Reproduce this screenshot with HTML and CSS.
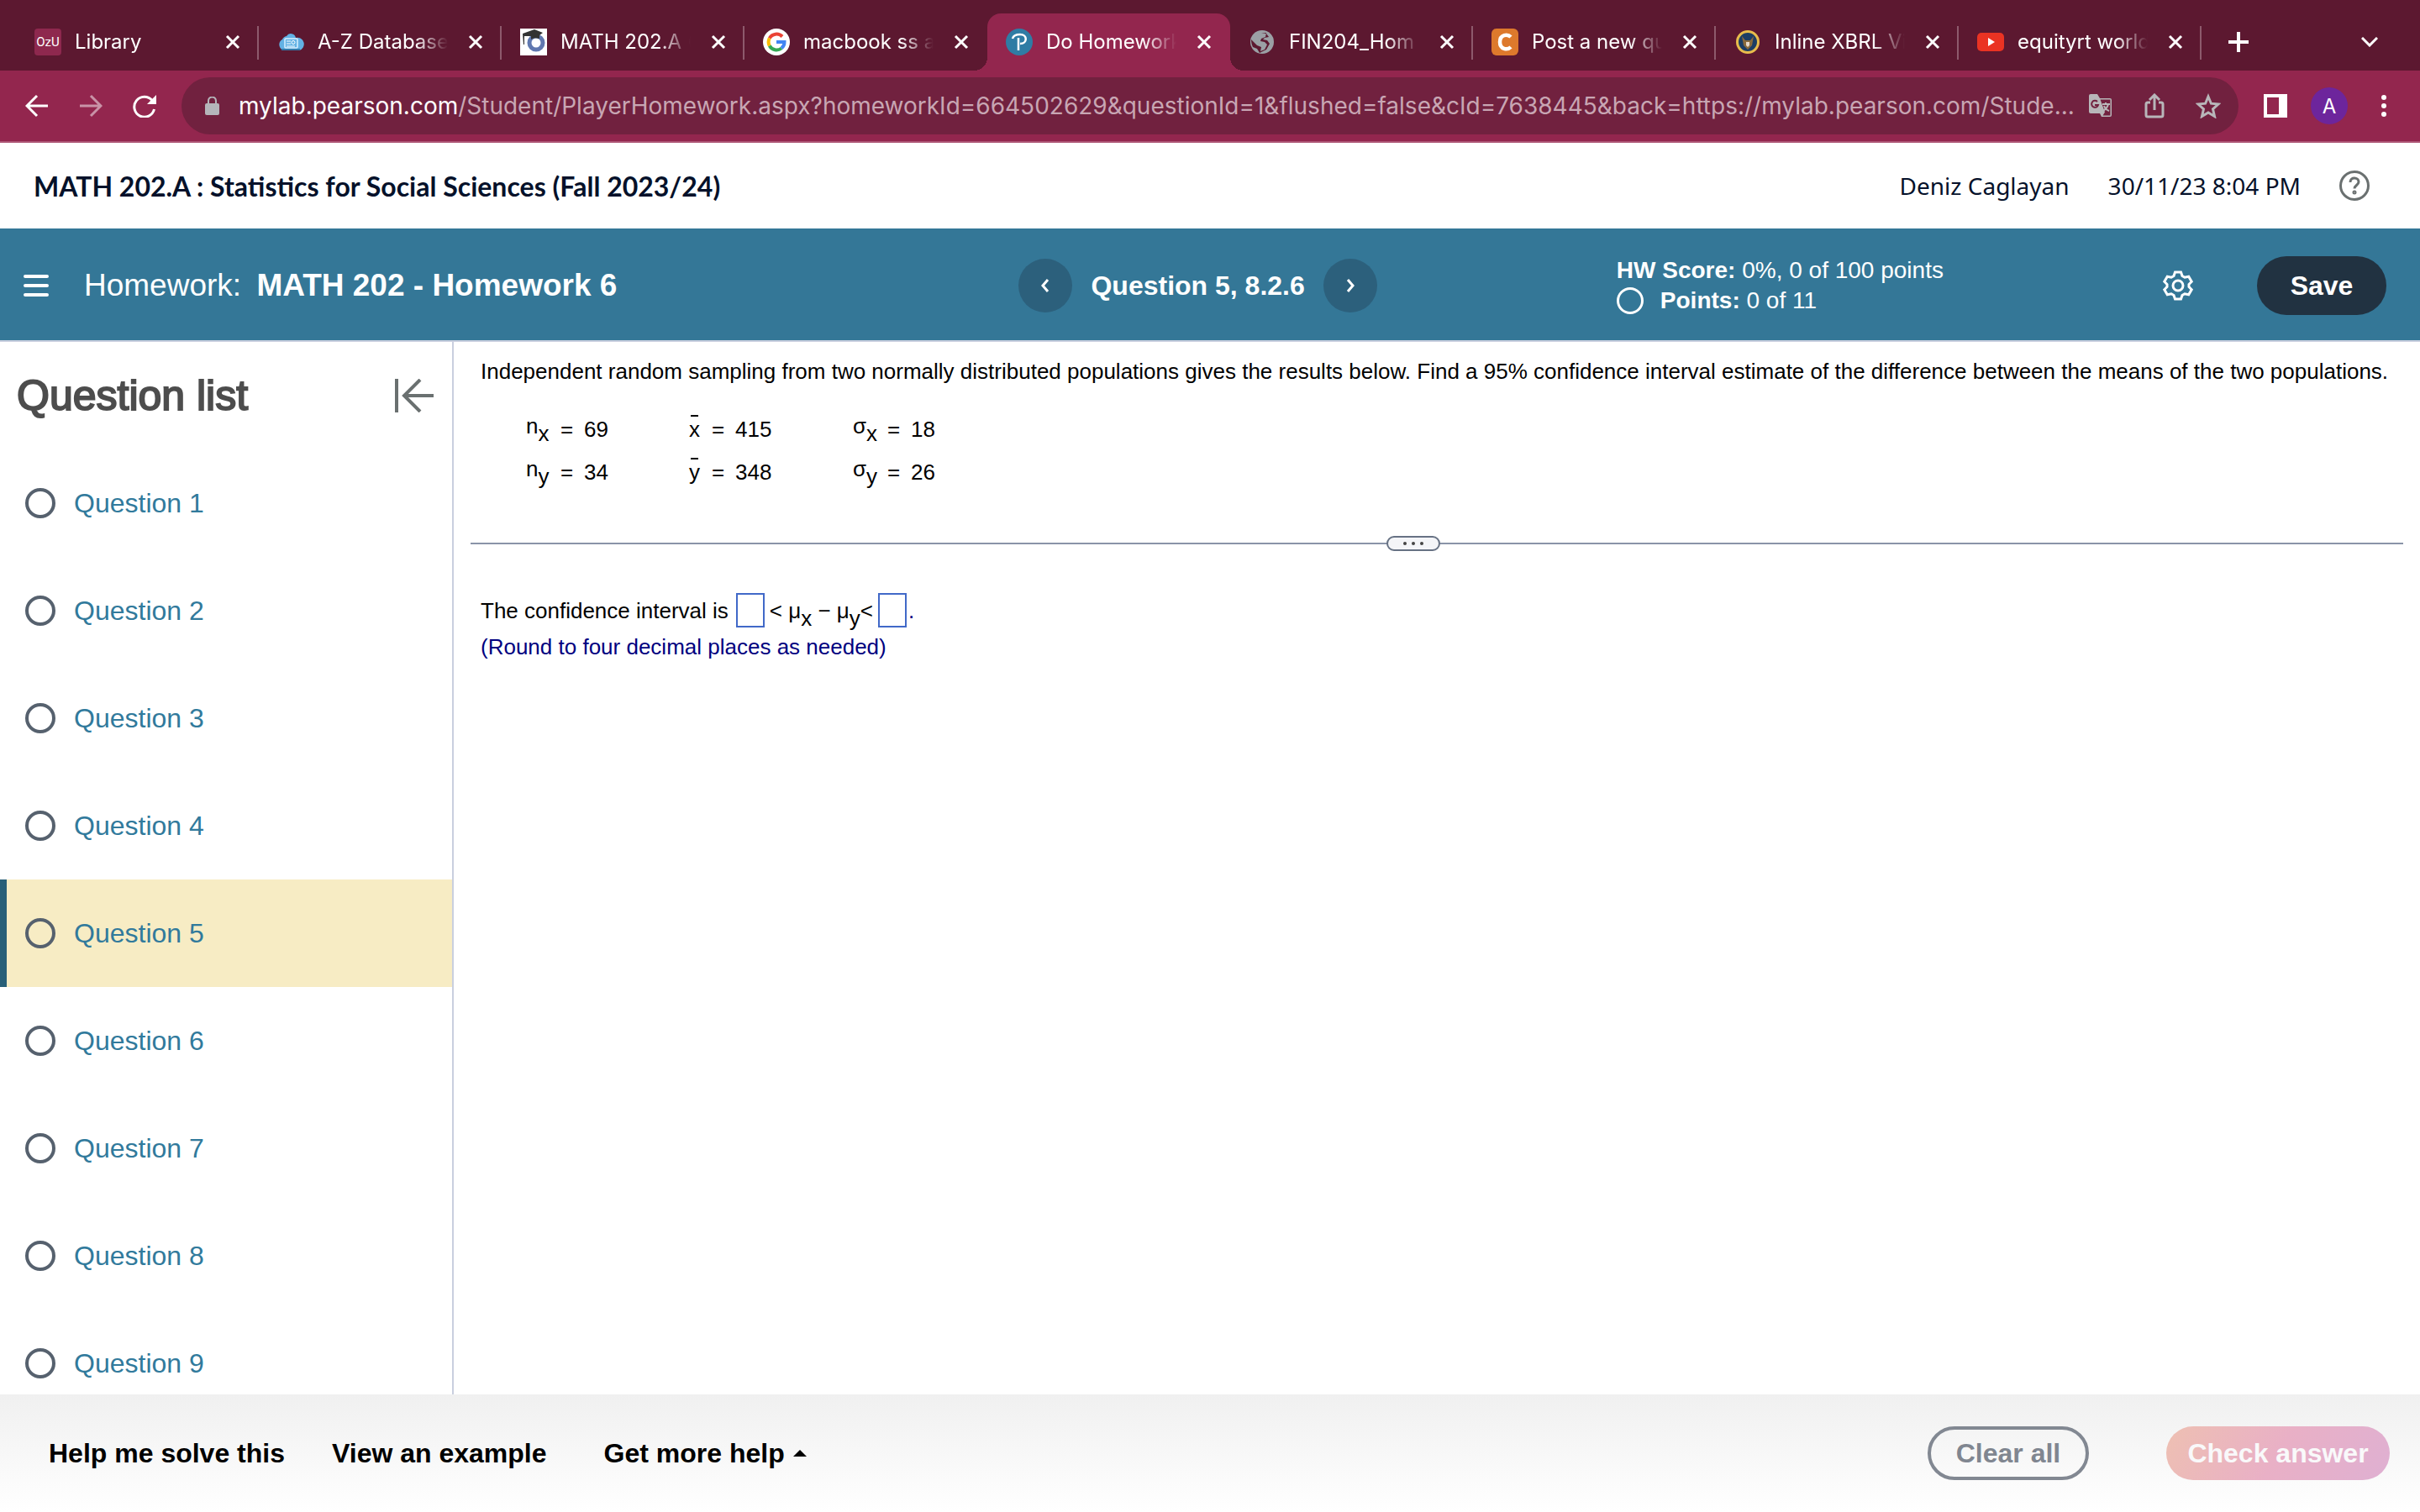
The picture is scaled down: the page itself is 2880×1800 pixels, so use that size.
FILE: index.html
```html
<!DOCTYPE html>
<html lang="en">
  <head>
    <meta charset="UTF-8" />
    <meta name="viewport" content="width=device-width, initial-scale=1.0" />
    <title>Do Homework - MATH 202 - Homework 6</title>
    <link rel="stylesheet" href="styles.css">
  </head>

  <body>
    <!-- browser tabs -->
    <div class="tabs">
      <div class="tab">
        <span class="favicon ozu">OzU</span>
        <span class="tab-title">Library</span>
        <button class="tab-close" aria-label="Close tab"><svg viewBox="0 0 18 18"><path d="M2 2l14 14M16 2L2 16" /></svg></button>
      </div>
      <div class="tab">
        <svg class="favicon" viewBox="0 0 32 32"><path d="M8 26a7 7 0 0 1-2-13 7 6 0 0 1 5-4 6 6 0 0 1 11 2 7 7 0 0 1 4 15z" fill="#62b1e4" /><path d="M5 25h22" stroke="#3278a8" stroke-width="2" /><rect x="9" y="12" width="15" height="11" rx="1" fill="#62b1e4" stroke="#d8efff" stroke-width="1.5" /><path d="M11 15h5M11 18h5M11 21h10" stroke="#fff" /><circle cx="19" cy="16.500" r="2" fill="none" stroke="#fff" /></svg>
        <span class="tab-title">A-Z Database</span>
        <button class="tab-close" aria-label="Close tab"><svg viewBox="0 0 18 18"><path d="M2 2l14 14M16 2L2 16" /></svg></button>
      </div>
      <div class="tab">
        <svg class="favicon" viewBox="0 0 32 32"><path d="M0 0h32v32H0z" fill="#fff" /><circle cx="19" cy="17" r="8" fill="none" stroke="#6078b0" stroke-width="5" /><path d="M3 6l14-5 10 4-4 3v4c-4-1-7-1-10 1V9L5 9v10H4z" fill="#333" /></svg>
        <span class="tab-title">MATH 202.A (</span>
        <button class="tab-close" aria-label="Close tab"><svg viewBox="0 0 18 18"><path d="M2 2l14 14M16 2L2 16" /></svg></button>
      </div>
      <div class="tab before-active">
        <svg class="favicon" viewBox="0 0 32 32"><circle cx="16" cy="16" r="16" fill="#fff" /><g fill="none" stroke-width="4"><path d="M23 9.500A9.500 9.500 0 0 0 7.800 11.500" stroke="#ea4335" /><path d="M7.800 11.500a9.500 9.500 0 0 0 0 9" stroke="#fbbc05" /><path d="M7.800 20.500A9.500 9.500 0 0 0 22 23.500" stroke="#34a853" /><path d="M22 23.500a9.500 9.500 0 0 0 3.500-7.500H16" stroke="#4285f4" /></g></svg>
        <span class="tab-title">macbook ss a</span>
        <button class="tab-close" aria-label="Close tab"><svg viewBox="0 0 18 18"><path d="M2 2l14 14M16 2L2 16" /></svg></button>
      </div>
      <div class="tab active">
        <svg class="favicon" viewBox="0 0 32 32"><circle cx="16" cy="16" r="16" fill="#2f7ca4" /><path d="M8 12c1-4 5-5 9-5 9 0 9 11 0 11M15 11v15" fill="none" stroke="#fff" stroke-width="2.500" /></svg>
        <span class="tab-title">Do Homework</span>
        <button class="tab-close" aria-label="Close tab"><svg viewBox="0 0 18 18"><path d="M2 2l14 14M16 2L2 16" /></svg></button>
      </div>
      <div class="tab">
        <svg class="favicon" viewBox="0 0 32 32"><circle cx="16" cy="16" r="14" fill="#9ba0a5" /><path d="M15 5h6l-1 5-5 2-1 3 5 1 3 3-3 6-5 2 1-5-5-2-7-7c0 4 1 7 2 9l5 2 3 5 2-1 6-3 4-7-3-4-5-1 2-2 5-1-3-4z" fill="#5c1830" /></svg>
        <span class="tab-title">FIN204_Hom</span>
        <button class="tab-close" aria-label="Close tab"><svg viewBox="0 0 18 18"><path d="M2 2l14 14M16 2L2 16" /></svg></button>
      </div>
      <div class="tab">
        <svg class="favicon" viewBox="0 0 32 32"><rect width="32" height="32" rx="6" fill="#dd792c" /><path d="M23 10c-4-4-13-3-13 6s9 10 13 6" fill="none" stroke="#fff" stroke-width="4.500" /></svg>
        <span class="tab-title">Post a new qu</span>
        <button class="tab-close" aria-label="Close tab"><svg viewBox="0 0 18 18"><path d="M2 2l14 14M16 2L2 16" /></svg></button>
      </div>
      <div class="tab">
        <svg class="favicon" viewBox="0 0 32 32"><circle cx="16" cy="16" r="12.500" fill="#1c3d64" stroke="#e8bc4c" stroke-width="3" /><path d="M9 9l2 11 5 5 5-5 2-11-4 5h-6z" fill="#8a6a3c" /><path d="M14 16h4v4l-2 2-2-2z" fill="#e6d8c8" /></svg>
        <span class="tab-title">Inline XBRL Vi</span>
        <button class="tab-close" aria-label="Close tab"><svg viewBox="0 0 18 18"><path d="M2 2l14 14M16 2L2 16" /></svg></button>
      </div>
      <div class="tab">
        <svg class="favicon" viewBox="0 0 32 32"><rect y="5" width="32" height="22" rx="5" fill="#ea3323" /><path d="M13 11l8 5-8 5z" fill="#fff" /></svg>
        <span class="tab-title">equityrt world</span>
        <button class="tab-close" aria-label="Close tab"><svg viewBox="0 0 18 18"><path d="M2 2l14 14M16 2L2 16" /></svg></button>
      </div>
      <button class="new-tab" aria-label="New tab"><svg viewBox="0 0 24 24"><path d="M12 0v24M0 12h24" /></svg></button>
      <button class="tab-search" aria-label="Search tabs"><svg viewBox="0 0 20 12"><path d="M1 1l9 9 9-9" /></svg></button>
    </div>

    <!-- browser toolbar -->
    <div class="toolbar">
      <button class="nav-icon" aria-label="Back"><svg viewBox="0 0 28 28"><path d="M27 14H3M14 2L2 14l12 12" /></svg></button>
      <button class="nav-icon disabled" aria-label="Forward"><svg viewBox="0 0 28 28"><path d="M1 14h24M14 2l12 12-12 12" /></svg></button>
      <button class="nav-icon" aria-label="Reload"><svg viewBox="0 0 28 28"><path d="M23 7.500A12 12 0 1 0 25.500 18" /><path d="M28 1v11H17z" fill="#fff" stroke="none" /></svg></button>
      <div class="omnibox">
        <svg class="lock" viewBox="0 0 18 22"><rect y="8" width="17" height="14" rx="2" fill="#b5b5ba" /><path d="M4 9V5a4.500 4.500 0 0 1 9 0v4" fill="none" stroke="#b5b5ba" stroke-width="2" /></svg>
        <p class="url"><span>mylab.pearson.com</span>/Student/PlayerHomework.aspx?homeworkId=664502629&amp;questionId=1&amp;flushed=false&amp;cId=7638445&amp;back=https://mylab.pearson.com/Stude...</p>
        <button class="omni-icon" aria-label="Translate"><svg viewBox="0 0 30 30"><path d="M3 1h8l3 5h12a2 2 0 0 1 2 2v18a2 2 0 0 1-2 2H16l-2-4H3a2 2 0 0 1-2-2V3a2 2 0 0 1 2-2z" fill="#b8b6b9" stroke="none" /><path d="M14.500 7.500h12v19h-9l2.500-4z" fill="#71213f" stroke="none" /><path d="M11 10a4 4 0 1 0 1 4H8" stroke="#71213f" stroke-width="2" /><path d="M17 13h9M21 11v2M24 13c-1 4-3 6-6 8M19 15c1 3 3 5 6 6" stroke-width="2" /></svg></button>
        <button class="omni-icon" aria-label="Share"><svg viewBox="0 0 30 30"><path d="M10 11H7a2 2 0 0 0-2 2v13a2 2 0 0 0 2 2h16a2 2 0 0 0 2-2V13a2 2 0 0 0-2-2h-3M15 20V3M9 8l6-6 6 6" /></svg></button>
        <button class="omni-icon" aria-label="Bookmark"><svg viewBox="0 0 30 30"><path d="M15 4l3.400 8.200 8.600.800-6.500 5.800 2 8.700-7.500-4.600-7.500 4.600 2-8.700L3 13l8.600-.800z" /></svg></button>
      </div>
      <button class="side-panel" aria-label="Side panel"></button>
      <button class="avatar" aria-label="Profile">A</button>
      <button class="more" aria-label="More"><svg viewBox="0 0 6 26"><circle cx="3" cy="3" r="3" /><circle cx="3" cy="13" r="3" /><circle cx="3" cy="23" r="3" /></svg></button>
    </div>

    <header class="course">
      <h1>MATH 202.A : Statistics for Social Sciences (Fall 2023/24)</h1>
      <span class="user">Deniz Caglayan</span>
      <span class="date">30/11/23 8:04 PM</span>
      <button class="help" aria-label="Help"><svg viewBox="0 0 36 36"><circle cx="18" cy="18" r="16.500" /><path d="M13 14c0-7 10-6 10-.500 0 4-5 4-5 8" /><circle cx="18" cy="26" r="1" /></svg></button>
    </header>

    <div class="homework">
      <div class="homework-name">
        <button class="menu" aria-label="Menu"><svg viewBox="0 0 30 26"><path d="M2 2h26M2 13h26M2 24h26" /></svg></button>
        <h2>Homework: <b>MATH 202 - Homework 6</b></h2>
      </div>
      <div class="question-nav">
        <button class="round" aria-label="Previous question"><svg viewBox="0 0 10 16"><path d="M8 1L2 8l6 7" /></svg></button>
        <h3>Question 5, 8.2.6</h3>
        <button class="round" aria-label="Next question"><svg viewBox="0 0 10 16"><path d="M2 1l6 7-6 7" /></svg></button>
      </div>
      <div class="score-bar">
        <div class="score">
          <p><b>HW Score:</b> 0%, 0 of 100 points</p>
          <p class="points"><i class="ring"></i><span><b>Points:</b> 0 of 11</span></p>
        </div>
        <button class="settings" aria-label="Settings"><svg viewBox="0 0 36 36"><path d="M14.500 2h7l1.500 4.500 3 1.700 4.700-1 3.500 6-3.200 3.300v3l3.200 3.300-3.500 6-4.700-1-3 1.700-1.500 4.500h-7L13 29.500l-3-1.700-4.700 1-3.500-6L5 19.500v-3l-3.200-3.300 3.500-6 4.700 1 3-1.700z" /><circle cx="18" cy="18" r="6" /></svg></button>
        <button class="save">Save</button>
      </div>
    </div>

    <div class="content">
      <aside class="question-list">
        <div class="list-head">
          <h2>Question list</h2>
          <button class="collapse" aria-label="Collapse list"><svg viewBox="0 0 46 40"><path d="M2 0v40M46 20H11M30 1L11 20l19 19" /></svg></button>
        </div>
        <ul>
          <li><i class="circle"></i><a href="#">Question 1</a></li>
          <li><i class="circle"></i><a href="#">Question 2</a></li>
          <li><i class="circle"></i><a href="#">Question 3</a></li>
          <li><i class="circle"></i><a href="#">Question 4</a></li>
          <li class="current"><i class="circle"></i><a href="#">Question 5</a></li>
          <li><i class="circle"></i><a href="#">Question 6</a></li>
          <li><i class="circle"></i><a href="#">Question 7</a></li>
          <li><i class="circle"></i><a href="#">Question 8</a></li>
          <li><i class="circle"></i><a href="#">Question 9</a></li>
        </ul>
      </aside>

      <main class="question">
        <p class="prompt">Independent random sampling from two normally distributed populations gives the results below. Find a 95% confidence interval estimate of the difference between the means of the two populations.</p>
        <table class="data">
          <tr>
            <td class="symbol"><span class="raised">n</span><sub>x</sub></td><td class="equals">=</td><td class="value">69</td>
            <td class="mean"><span class="bar">x</span></td><td class="equals">=</td><td class="value wide">415</td>
            <td class="symbol"><span class="raised">σ</span><sub>x</sub></td><td class="equals">=</td><td class="value">18</td>
          </tr>
          <tr>
            <td class="symbol"><span class="raised">n</span><sub>y</sub></td><td class="equals">=</td><td class="value">34</td>
            <td class="mean"><span class="bar">y</span></td><td class="equals">=</td><td class="value wide">348</td>
            <td class="symbol"><span class="raised">σ</span><sub>y</sub></td><td class="equals">=</td><td class="value">26</td>
          </tr>
        </table>
        <div class="divider"><button aria-label="Resize"><i></i><i></i><i></i></button></div>
        <div class="answer">
          <label for="lower">The confidence interval is</label>
          <input type="text" id="lower" />
          <label for="upper">&lt; μ<sub>x</sub> − μ<sub>y</sub>&lt;</label>
          <input type="text" id="upper" /><span class="dot">.</span>
        </div>
        <p class="hint">(Round to four decimal places as needed)</p>
      </main>
    </div>

    <footer>
      <a href="#">Help me solve this</a>
      <a href="#">View an example</a>
      <a href="#" class="more-help">Get more help<svg viewBox="0 0 16 8"><path d="M0 8l8-8 8 8z" /></svg></a>
      <button class="clear">Clear all</button>
      <button class="check">Check answer</button>
    </footer>
  </body>
</html>
```
FILE: styles.css
```css
* {
  box-sizing: border-box;
}

body {
  font-family: "Liberation Sans", Arial, sans-serif;
  background: white;
  color: black;
  display: flex;
  flex-direction: column;
  height: 100vh;
  margin: 0;
  overflow: hidden;
}

h1,
h2,
h3,
p,
ul {
  margin: 0;
  padding: 0;
}

button {
  font-family: inherit;
  background: none;
  border: none;
  padding: 0;
  color: inherit;
  cursor: pointer;
  flex-shrink: 0;
}

svg {
  display: block;
  fill: none;
}

/* tabs */
.tabs {
  background: #5c1830;
  color: white;
  height: 84px;
  padding: 16px 50px 0 19px;
  display: flex;
  align-items: stretch;
  font-family: Inter, sans-serif;
  flex-shrink: 0;
}

.tab {
  position: relative;
  flex: 0 1 289px;
  min-width: 0;
  display: flex;
  align-items: center;
  padding: 0 22px;
}

.tab::after {
  content: "";
  position: absolute;
  right: 0;
  top: 15px;
  width: 2px;
  height: 40px;
  background: #8d5a6c;
}

.tab.before-active::after {
  display: none;
}

.tab.active {
  background: #93264e;
  border-radius: 16px 16px 0 0;
}

/* rounded feet of the active tab */
.tab.active::before,
.tab.active::after {
  content: "";
  position: absolute;
  top: auto;
  bottom: 0;
  width: 16px;
  height: 16px;
}

.tab.active::before {
  left: -16px;
  background: radial-gradient(circle at 0 0, transparent 16px, #93264e 16px);
}

.tab.active::after {
  right: -16px;
  background: radial-gradient(circle at 100% 0, transparent 16px, #93264e 16px);
}

.favicon {
  width: 32px;
  height: 32px;
  margin-right: 16px;
  flex-shrink: 0;
}

.ozu {
  background: #8e284e;
  border-radius: 4px;
  font: 15px/32px Roboto, sans-serif;
  text-align: center;
}

.tab-title {
  flex: 1;
  font-size: 24px;
  line-height: 32px;
  white-space: nowrap;
  overflow: hidden;
  margin-right: 24px;
  -webkit-mask-image: linear-gradient(to right, black 75%, transparent);
  mask-image: linear-gradient(to right, black 75%, transparent);
}

.tab-close svg {
  width: 18px;
  height: 18px;
  stroke: white;
  stroke-width: 3;
}

.new-tab svg {
  width: 24px;
  height: 24px;
  margin-left: 32px;
  stroke: white;
  stroke-width: 4;
}

.tab-search {
  margin-left: auto;
}

.tab-search svg {
  width: 20px;
  height: 12px;
  stroke: white;
  stroke-width: 3;
}

/* toolbar */
.toolbar {
  background: #93264e;
  border-bottom: 2px solid #ad5575;
  color: white;
  height: 86px;
  padding: 0 40px 0 30px;
  display: flex;
  align-items: center;
  font-family: Inter, sans-serif;
  flex-shrink: 0;
}

.nav-icon {
  margin-right: 36px;
}

.nav-icon svg {
  width: 28px;
  height: 28px;
  stroke: white;
  stroke-width: 3;
}

.nav-icon.disabled {
  opacity: 0.5;
}

.omnibox {
  flex: 1;
  min-width: 0;
  height: 68px;
  border-radius: 34px;
  background: #71213f;
  display: flex;
  align-items: center;
  gap: 34px;
  padding: 0 21px 0 28px;
  margin: 0 30px 0 -6px;
}

.lock {
  width: 18px;
  height: 22px;
  flex-shrink: 0;
}

.url {
  flex: 1;
  min-width: 0;
  margin-left: -12px;
  margin-right: -24px;
  font-size: 28px;
  line-height: 36px;
  color: #c8a6b3;
  white-space: nowrap;
}

.url span {
  color: white;
}

.omni-icon svg {
  width: 30px;
  height: 30px;
  stroke: #b8b6b9;
  stroke-width: 3;
}

.side-panel {
  width: 28px;
  height: 28px;
  border: 4px solid white;
  border-right-width: 10px;
}

.avatar {
  width: 44px;
  height: 44px;
  border-radius: 50%;
  background: #6d259c;
  font-size: 24px;
  margin: 0 40px 0 28px;
}

.more svg {
  width: 6px;
  height: 26px;
  fill: white;
}

/* course header */
.course {
  height: 102px;
  padding: 0 60px 0 40px;
  display: flex;
  align-items: center;
  font-family: "Noto Sans", sans-serif;
  font-size: 28px;
  color: #05112a;
  flex-shrink: 0;
}

.course h1 {
  font-family: Lato, sans-serif;
  font-size: 32px;
  font-weight: bold;
  margin-right: auto;
}

.date {
  margin: 0 46px;
}

.help svg {
  width: 36px;
  height: 36px;
  stroke: #6a7070;
  stroke-width: 3;
}

/* homework header */
.homework {
  background: #347797;
  border-bottom: 2px solid #c9cfdf;
  color: white;
  height: 135px;
  padding-top: 3px;
  display: grid;
  grid-template-columns: 42.1% 24.7% 1fr;
  align-items: center;
  flex-shrink: 0;
}

.homework-name {
  display: flex;
  align-items: center;
  padding-left: 28px;
}

.menu svg {
  width: 30px;
  height: 26px;
  margin-right: 42px;
  stroke: white;
  stroke-width: 4;
  stroke-linecap: round;
}

.homework-name h2 {
  font-size: 37px;
  font-weight: normal;
}

.homework-name b {
  margin-left: 8px;
}

.question-nav {
  display: flex;
  align-items: center;
  gap: 22px;
}

.question-nav h3 {
  font-size: 32px;
}

.round {
  width: 64px;
  height: 64px;
  border-radius: 50%;
  background: #2c607c;
}

.round svg {
  width: 10px;
  height: 16px;
  margin: 0 auto;
  stroke: white;
  stroke-width: 3;
}

.score-bar {
  display: flex;
  align-items: center;
  padding-right: 40px;
}

.score {
  font-size: 28px;
  line-height: 36px;
  margin-right: auto;
}

.points {
  display: flex;
  align-items: center;
}

.ring {
  width: 32px;
  height: 32px;
  border: 3px solid white;
  border-radius: 50%;
  margin-right: 20px;
}

.settings svg {
  width: 36px;
  height: 36px;
  margin-right: 76px;
  stroke: white;
  stroke-width: 3;
}

.save {
  width: 154px;
  height: 70px;
  border-radius: 35px;
  background: #213241;
  font-size: 32px;
  font-weight: bold;
}

/* content */
.content {
  flex: 1;
  min-height: 0;
  display: flex;
  overflow: hidden;
}

.question-list {
  width: 540px;
  border-right: 2px solid #c9cfdf;
  flex-shrink: 0;
}

.list-head {
  height: 128px;
  display: flex;
  align-items: center;
  justify-content: space-between;
  padding: 0 22px 0 20px;
}

.list-head h2 {
  font-size: 50px;
  font-weight: normal;
  color: #4d4d4d;
  -webkit-text-stroke: 2px #4d4d4d;
}

.collapse svg {
  width: 46px;
  height: 40px;
  stroke: #6a7070;
  stroke-width: 4;
}

.question-list li {
  height: 128px;
  display: flex;
  align-items: center;
  padding-left: 22px;
  border-left: 8px solid transparent;
  font-size: 32px;
}

.question-list a {
  color: #317a9c;
  text-decoration: none;
}

.question-list .current {
  background: #f7ecc4;
  border-color: #285f78;
}

.circle {
  width: 36px;
  height: 36px;
  border: 4px solid #56616e;
  border-radius: 50%;
  margin-right: 22px;
}

.question {
  flex: 1;
  min-width: 0;
  padding: 19px 20px 0;
  font-size: 26px;
  line-height: 32px;
}

.prompt,
.answer,
.hint {
  padding-left: 12px;
}

.data {
  border-collapse: collapse;
  margin: 27px 0 0 66px;
}

.data td {
  padding: 0;
  height: 51px;
}

.symbol {
  width: 41px;
}

.mean {
  width: 27px;
}

.equals {
  width: 28px;
}

.value {
  width: 125px;
}

.value.wide {
  width: 140px;
}

.raised {
  line-height: 0;
  vertical-align: 4px;
}

sub {
  font-size: 26px;
  line-height: 0;
  vertical-align: -5px;
}

.answer sub {
  vertical-align: -9px;
}

.bar {
  position: relative;
}

.bar::before {
  content: "";
  position: absolute;
  left: 2px;
  top: -2px;
  width: 9px;
  height: 2px;
  background: black;
}

.divider {
  position: relative;
  height: 2px;
  background: #8a94a8;
  margin-top: 59px;
  display: flex;
  justify-content: center;
  align-items: center;
}

.divider button {
  width: 64px;
  height: 18px;
  border: 2px solid #677284;
  border-radius: 9px;
  background: #f4f5f8;
  display: flex;
  justify-content: center;
  align-items: center;
  gap: 6px;
  margin-right: 56px;
}

.divider i {
  width: 4px;
  height: 4px;
  border-radius: 50%;
  background: #444;
}

.answer {
  display: flex;
  align-items: center;
  margin-top: 58px;
}

.answer input {
  width: 34px;
  height: 41px;
  border: 2px solid #4169c8;
  padding: 0 4px;
  margin: 0 6px 0 9px;
  font-size: 26px;
}

.answer #upper {
  margin: 0 2px 0 6px;
}

.hint {
  margin-top: 7px;
}

.hint,
.dot {
  color: #000080;
}

/* footer */
footer {
  height: 140px;
  background: linear-gradient(#f0f0f0, white);
  display: flex;
  align-items: center;
  padding: 0 36px 0 58px;
  font-size: 32px;
  font-weight: bold;
  flex-shrink: 0;
}

footer a {
  color: black;
  text-decoration: none;
  margin-right: 56px;
}

.more-help {
  display: flex;
  align-items: center;
  margin-left: 12px;
}

.more-help svg {
  width: 16px;
  height: 8px;
  margin-left: 10px;
  fill: black;
}

.clear,
.check {
  height: 64px;
  border-radius: 32px;
  font-size: 32px;
  font-weight: bold;
}

.clear {
  width: 192px;
  border: 4px solid #828892;
  color: #808690;
  margin-left: auto;
  margin-right: 92px;
}

.check {
  width: 266px;
  color: #f9f9fa;
  background: linear-gradient(120deg, #eec0b2, #e9b0c6 50%, #dfb0d2);
}
```
